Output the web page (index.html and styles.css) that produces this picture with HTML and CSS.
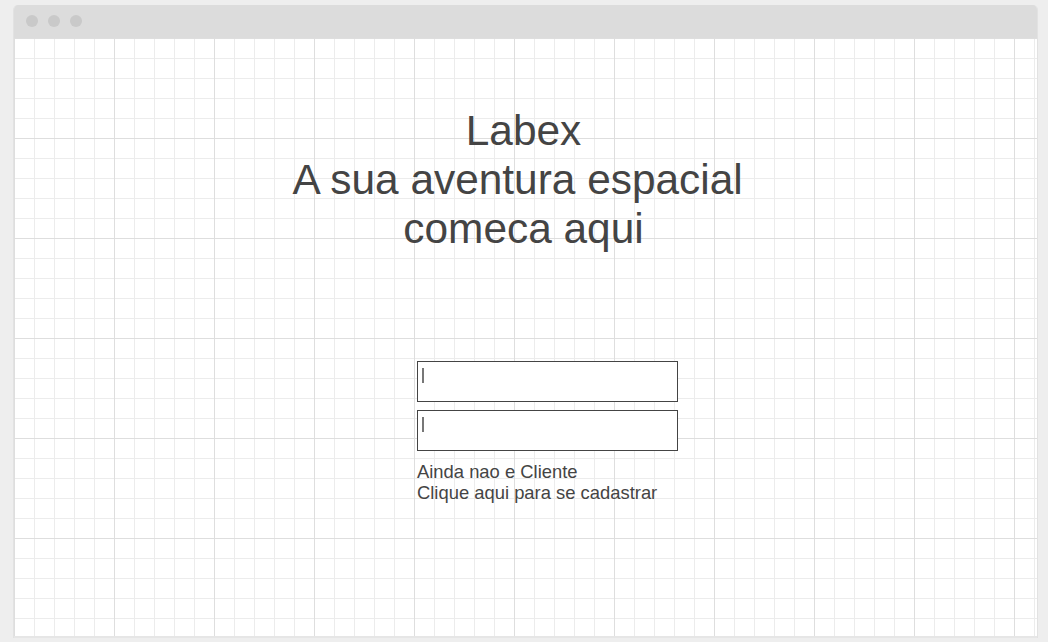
FILE: index.html
```html
<!DOCTYPE html>
<html lang="pt">
<head>
<meta charset="utf-8">
<title>Labex</title>
<link rel="stylesheet" href="styles.css">
</head>
<body>
<div class="window">
  <div class="titlebar">
    <span class="dot"></span><span class="dot"></span><span class="dot"></span>
  </div>
  <div class="canvas">
    <h1 class="headline">Labex<br>A sua aventura espacial&nbsp;<br>comeca aqui</h1>
    <div class="login">
      <div class="field"><span class="caret"></span></div>
      <div class="field"><span class="caret"></span></div>
      <p class="signup">Ainda nao e Cliente<br>Clique aqui para se cadastrar</p>
    </div>
  </div>
</div>
</body>
</html>
```

FILE: styles.css
```css
html, body {
  margin: 0;
  padding: 0;
}
body {
  background: #eeeeee;
  font-family: "Liberation Sans", Arial, sans-serif;
  color: #444444;
  padding: 5px 10px 0 13px;
  height: 642px;
  box-sizing: border-box;
  overflow: hidden;
}
.window {
  width: 1025px;
  border-radius: 5px 5px 0 0;
  overflow: hidden;
  border-left: 1px solid #e2e2e2;
  border-right: 1px solid #e2e2e2;
  box-sizing: border-box;
}
.titlebar {
  height: 33px;
  background: #dcdcdc;
  display: flex;
  align-items: center;
  gap: 10px;
  padding-left: 12px;
  padding-bottom: 1px;
  box-sizing: border-box;
}
.dot {
  width: 12px;
  height: 12px;
  border-radius: 50%;
  background: #c9c9c9;
}
.canvas {
  height: 600px;
  background-color: #ffffff;
  background-image:
    linear-gradient(to right, #dedede 1px, transparent 1px),
    linear-gradient(to bottom, #dedede 1px, transparent 1px),
    linear-gradient(to right, #ececec 1px, transparent 1px),
    linear-gradient(to bottom, #ececec 1px, transparent 1px);
  background-size: 100px 100px, 100px 100px, 20px 20px, 20px 20px;
  background-position: 0 0;
  border-bottom: 2px solid #e6e6e6;
  padding-top: 68px;
  box-sizing: border-box;
}
.headline {
  margin: 0;
  font-weight: normal;
  font-size: 42.4px;
  line-height: 49px;
  text-align: center;
  padding-right: 4px;
  color: #444444;
}
.login {
  margin: 108px 0 0 403px;
  width: 261px;
  display: flex;
  flex-direction: column;
  gap: 8px;
}
.field {
  height: 41px;
  border: 1px solid #444444;
  background: #ffffff;
  box-sizing: border-box;
  display: flex;
  align-items: flex-start;
}
.caret {
  width: 0;
  height: 15px;
  border-left: 2px solid #777777;
  margin: 6px 0 0 4px;
}
.signup {
  margin: 2px 0 0 0;
  font-size: 18.4px;
  line-height: 21px;
  white-space: nowrap;
  color: #444444;
}
```
